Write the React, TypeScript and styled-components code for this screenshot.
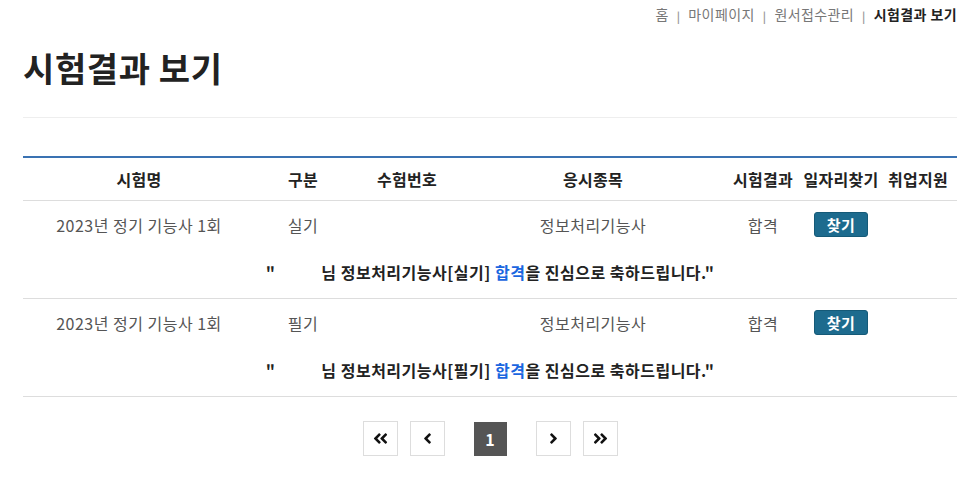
import React from "react";
import styled, { createGlobalStyle } from "styled-components";
import { FaAngleDoubleLeft, FaAngleDoubleRight, FaAngleLeft, FaAngleRight } from "react-icons/fa";

const GlobalStyle = createGlobalStyle`
  body {
    margin: 0;
    background: #fff;
    font-family: "Noto Sans CJK KR", "Noto Sans", sans-serif;
    color: #333;
  }
`;

// ============== STYLED COMPONENTS ==============

const Page = styled.div`
  padding: 0 20px 0 23px;
`;

const Breadcrumb = styled.div`
  display: flex;
  justify-content: flex-end;
  align-items: center;
  height: 28px;
  font-size: 14px;
  letter-spacing: 0.4px;
  color: #666;
`;

const Crumb = styled.span<{ $current?: boolean }>`
  font-weight: ${(p) => (p.$current ? 700 : 400)};
  color: ${(p) => (p.$current ? "#222" : "#777")};
`;

const Sep = styled.span`
  margin: 0 8px;
  font-size: 11px;
  font-weight: 700;
  color: #999;
  position: relative;
  top: 2px;
`;

const Title = styled.h2`
  margin: 20px 0 0;
  font-size: 34px;
  line-height: 40px;
  font-weight: 700;
  color: #222;
  letter-spacing: 0.6px;
`;

const Divider = styled.hr`
  margin: 29px 0 0;
  border: none;
  border-top: 1px solid #eee;
`;

const Table = styled.table`
  width: 100%;
  margin-top: 38px;
  border-collapse: collapse;
  table-layout: fixed;
  border-top: 2px solid #3a72b2;
`;

const Th = styled.th`
  height: 42px;
  padding: 0;
  font-size: 16px;
  letter-spacing: 0.3px;
  font-weight: 700;
  color: #222;
  text-align: center;
  white-space: nowrap;
  border-bottom: 1px solid #ddd;
`;

const Td = styled.td`
  height: 47px;
  padding: 0;
  font-size: 16px;
  letter-spacing: 0.5px;
  color: #555;
  text-align: center;
  white-space: nowrap;
`;

const MessageCell = styled.td`
  height: 48px;
  padding: 0 0 2px;
  font-size: 16px;
  letter-spacing: 0.5px;
  font-weight: 700;
  color: #222;
  text-align: center;
  white-space: nowrap;
  border-bottom: 1px solid #ddd;
`;

const NameBlank = styled.span`
  display: inline-block;
  width: 46px;
`;

const Pass = styled.span`
  color: #1a66e0;
`;

const FindButton = styled.button`
  width: 54px;
  height: 25px;
  padding: 0;
  border: 1px solid #155a78;
  border-radius: 3px;
  background: #1d6b8e;
  color: #fff;
  font-family: inherit;
  font-size: 15px;
  font-weight: 700;
  letter-spacing: 0.5px;
  cursor: pointer;
`;

const Pager = styled.div`
  display: flex;
  justify-content: center;
  align-items: center;
  gap: 12px;
  margin-top: 24px;
`;

const PageNav = styled.button`
  width: 35px;
  height: 35px;
  padding: 0;
  display: flex;
  align-items: center;
  justify-content: center;
  border: 1px solid #ddd;
  background: #fff;
  color: #111;
  font-size: 17px;
  cursor: pointer;
`;

const PageNumbers = styled.div`
  display: flex;
  margin: 0 17px;
`;

const PageNumber = styled.span<{ $active?: boolean }>`
  width: 33px;
  height: 34px;
  display: flex;
  align-items: center;
  justify-content: center;
  background: ${(p) => (p.$active ? "#555" : "#fff")};
  color: ${(p) => (p.$active ? "#fff" : "#333")};
  font-size: 16px;
  font-weight: 700;
`;

// ============== DATA ==============

const columns = [
  { label: "시험명", width: 232 },
  { label: "구분", width: 96 },
  { label: "수험번호", width: 112 },
  { label: "응시종목", width: 260 },
  { label: "시험결과", width: 80 },
  { label: "일자리찾기", width: 76 },
  { label: "취업지원", width: 78 },
];

const results = [
  { exam: "2023년 정기 기능사 1회", type: "실기", number: "", subject: "정보처리기능사", result: "합격" },
  { exam: "2023년 정기 기능사 1회", type: "필기", number: "", subject: "정보처리기능사", result: "합격" },
];

// ============== COMPONENT ==============

export default function App() {
  return (
    <>
      <GlobalStyle />
      <Page>
        <Breadcrumb>
          <Crumb>홈</Crumb>
          <Sep>|</Sep>
          <Crumb>마이페이지</Crumb>
          <Sep>|</Sep>
          <Crumb>원서접수관리</Crumb>
          <Sep>|</Sep>
          <Crumb $current>시험결과 보기</Crumb>
        </Breadcrumb>

        <Title>시험결과 보기</Title>
        <Divider />

        <Table>
          <colgroup>
            {columns.map((c) => (
              <col key={c.label} style={{ width: c.width }} />
            ))}
          </colgroup>
          <thead>
            <tr>
              {columns.map((c) => (
                <Th key={c.label}>{c.label}</Th>
              ))}
            </tr>
          </thead>
          <tbody>
            {results.map((r, i) => (
              <React.Fragment key={i}>
                <tr>
                  <Td>{r.exam}</Td>
                  <Td>{r.type}</Td>
                  <Td>{r.number}</Td>
                  <Td>{r.subject}</Td>
                  <Td>{r.result}</Td>
                  <Td>
                    <FindButton>찾기</FindButton>
                  </Td>
                  <Td></Td>
                </tr>
                <tr>
                  <MessageCell colSpan={7}>
                    "<NameBlank />님 {r.subject}[{r.type}] <Pass>{r.result}</Pass>을 진심으로 축하드립니다."
                  </MessageCell>
                </tr>
              </React.Fragment>
            ))}
          </tbody>
        </Table>

        <Pager>
          <PageNav aria-label="처음">
            <FaAngleDoubleLeft />
          </PageNav>
          <PageNav aria-label="이전">
            <FaAngleLeft />
          </PageNav>
          <PageNumbers>
            <PageNumber $active>1</PageNumber>
          </PageNumbers>
          <PageNav aria-label="다음">
            <FaAngleRight />
          </PageNav>
          <PageNav aria-label="마지막">
            <FaAngleDoubleRight />
          </PageNav>
        </Pager>
      </Page>
    </>
  );
}
